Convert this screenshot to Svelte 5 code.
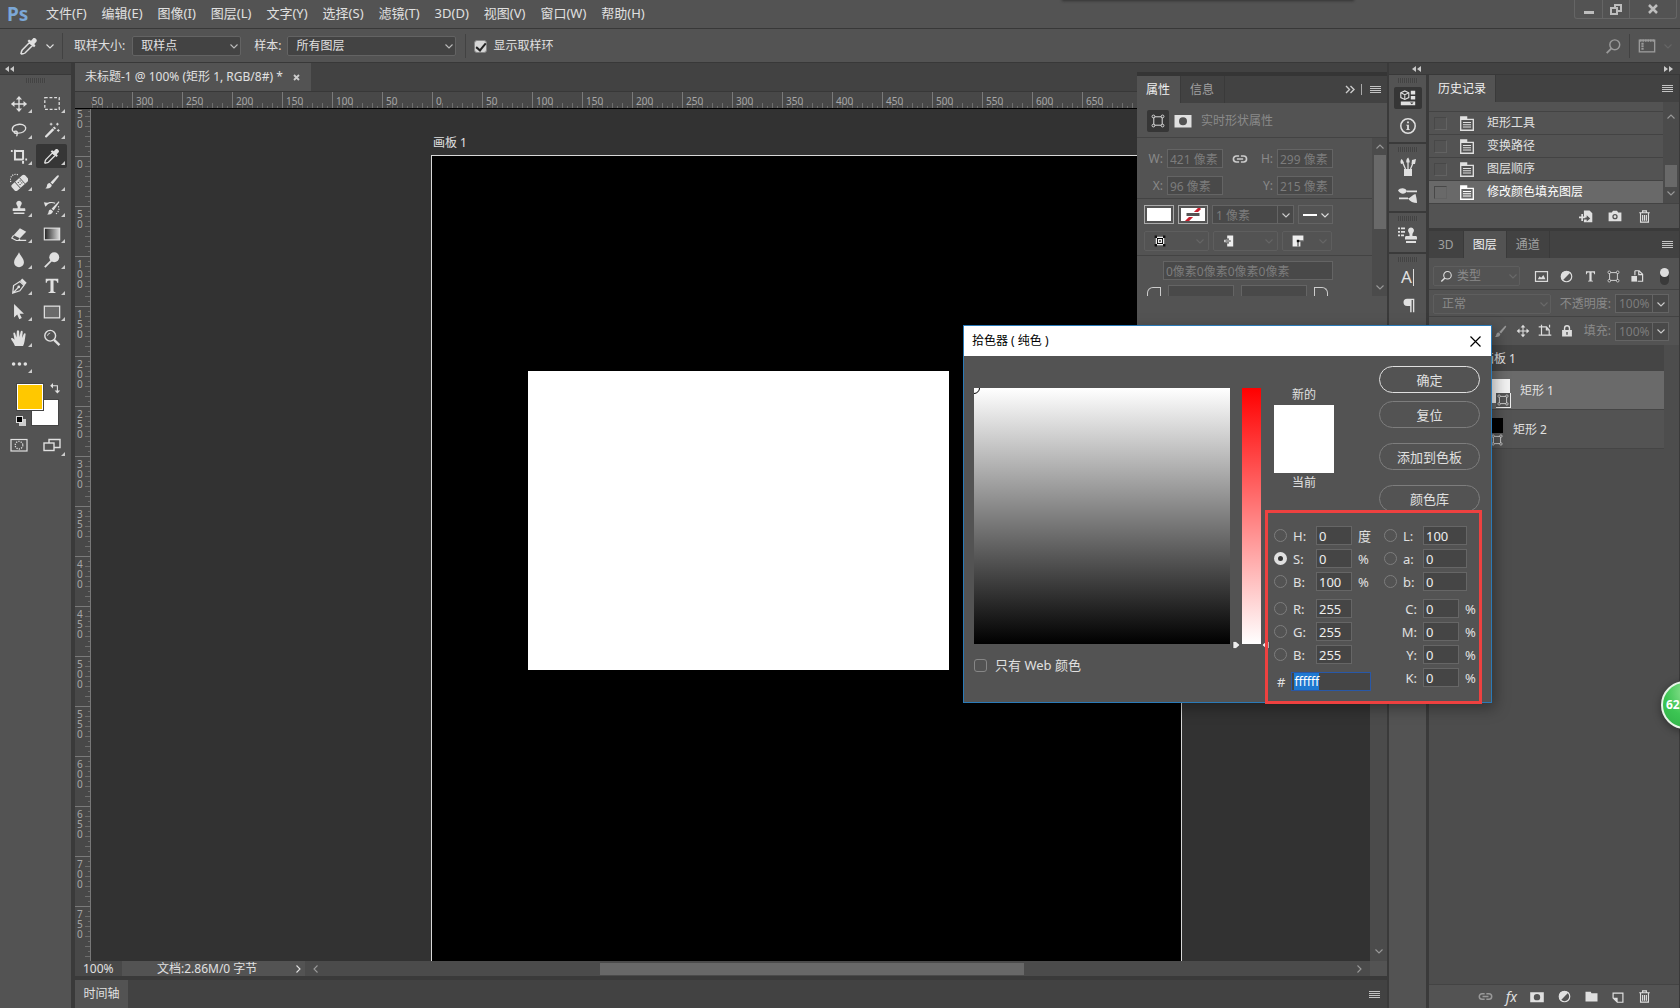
<script lang="ts">
	import { onMount } from 'svelte';

	const menus = ['文件(F)', '编辑(E)', '图像(I)', '图层(L)', '文字(Y)', '选择(S)', '滤镜(T)', '3D(D)', '视图(V)', '窗口(W)', '帮助(H)'];

	const tools = [
		['move', '移动'], ['marquee', '选框'],
		['lasso', '套索'], ['wand', '魔棒'],
		['crop', '裁剪'], ['eyedropper', '吸管'],
		['heal', '修复画笔'], ['brush', '画笔'],
		['stamp', '仿制图章'], ['history', '历史记录画笔'],
		['eraser', '橡皮擦'], ['gradient', '渐变'],
		['blur', '模糊'], ['dodge', '减淡'],
		['pen', '钢笔'], ['type', '文字'],
		['arrow', '路径选择'], ['rect', '矩形'],
		['hand', '抓手'], ['zoom', '缩放'],
		['dots', '更多']
	];

	const xLabels = Array.from({ length: 21 }, (_, i) => Math.abs(-350 + i * 50));
	const yLabels = Array.from({ length: 17 }, (_, i) => Math.abs(-50 + i * 50));

	const history = ['矩形工具', '变换路径', '图层顺序', '修改颜色填充图层'];
	let currentStep = $state(3);
	let activeTool = $state('eyedropper');
	let channel = $state('S');
	let hex = $state('ffffff');
	let hexInput: HTMLInputElement;

	const hsb = [
		{ id: 'H', label: 'H:', value: '0', unit: '度' },
		{ id: 'S', label: 'S:', value: '0', unit: '%' },
		{ id: 'B', label: 'B:', value: '100', unit: '%' }
	];
	const rgb = [
		{ id: 'R', label: 'R:', value: '255', unit: '' },
		{ id: 'G', label: 'G:', value: '255', unit: '' },
		{ id: 'Bl', label: 'B:', value: '255', unit: '' }
	];
	const lab = [
		{ id: 'L', label: 'L:', value: '100' },
		{ id: 'a', label: 'a:', value: '0' },
		{ id: 'b', label: 'b:', value: '0' }
	];
	const cmyk = ['C', 'M', 'Y', 'K'];

	// all icons are drawn on a 20x20 grid
	const icons: Record<string, string> = {
		move: '<path d="M10 4v12M4 10h12" stroke="currentColor" stroke-width="1.5"/><path d="M10 1l3.400 4H6.600zM10 19l3.400-4H6.600zM1 10l4-3.400v6.800zM19 10l-4-3.400v6.800z"/>',
		marquee: '<rect x="2" y="3" width="16" height="13" fill="none" stroke="currentColor" stroke-width="1.4" stroke-dasharray="3.2 2"/>',
		lasso: '<path d="M6 13C1 11.500 1.500 6 7 4.300c5-1.600 10 0 10.500 3.400.4 3.500-4 6-9 5.700M8 13c.5-1.800-2.800-2.300-3.300-.8-.4 1.500 2.500 2 3.300.8 .4 1.400-.8 2.600-.3 4" fill="none" stroke="currentColor" stroke-width="1.500"/>',
		wand: '<path d="M2.500 16.500L10.500 8l2 2-8.500 8.200c-1 .8-2.500-.7-1.500-1.700z"/><path d="M11 7.500l1.500-1.500 2 2L13 9.500z"/><path d="M9 2v3M7.500 3.500h3M16 2v3M14.500 3.500h3M17 9v3M15.500 10.500h3" stroke="currentColor" stroke-width="1.100"/>',
		crop: '<path d="M5.500 3V14H15M1 4.500H3M5 4.500H14.500V14M14.500 15.500v3M17 14h2" fill="none" stroke="currentColor" stroke-width="2.200"/>',
		eyedropper: '<path d="M10.500 6.500l3 3L6 17c-1.500 1-2 .5-3.500 1L2 17.500c.5-1.500.2-2 1.200-3.500z" fill="none" stroke="currentColor" stroke-width="1.500"/><path d="M8.500 5l1.500-1.500 2 1.200L14 2.500c1.500-1.500 5 1.500 3.400 3.200L15.300 8l1.200 1.700-1.500 1.500z"/>',
		heal: '<g transform="rotate(-42 11 11)"><rect x="1" y="6.500" width="20" height="9" rx="2.500"/><path d="M7.500 6.500v9M14.500 6.500v9" stroke="#535353"/><path d="M9.300 9.500h1.200M12 9.500h1.200M9.300 12.500h1.200M12 12.500h1.200" stroke="#444" stroke-width="1.300"/></g><path d="M1 10a6 6 0 0 1 8-8" fill="none" stroke="currentColor" stroke-width="1.300" stroke-dasharray="1.300 1.300"/>',
		brush: '<path d="M17 2.500c.8.500.7 1.200.2 1.900l-6.500 8.100-2.400-2L15.600 3c.4-.5 1-.7 1.400-.5zM7.500 11.200l2.300 2c-.3 3-3.300 4.700-7.300 3.700 1.700-.6 1.700-1.700 2-3.300.4-1.600 1.600-2.400 3-2.400z"/>',
		stamp: '<path d="M10 2a3 3 0 0 1 2.300 5c-.8 1-.9 1.700-.8 3.200H16c.8 0 1 .5 1 1.200v2H3v-2c0-.7.200-1.200 1-1.200h4.500c.1-1.500 0-2.200-.8-3.200A3 3 0 0 1 10 2zM4 15h12v1.700H4z"/>',
		history: '<path d="M17.500 2.500l.8.800-6.500 9.500-2.300-1.900zM8.800 11.700l2.300 2c-.5 2.700-3 4.300-6.600 3.300 1.600-.8 1.400-1.500 1.700-2.900.3-1.500 1.300-2.500 2.600-2.400z"/><path d="M3 7c2-3 6.500-4 10.500-2.300" fill="none" stroke="currentColor" stroke-width="1.300"/><path d="M1 3.500l5.500 1-3.900 4z"/><path d="M17 8c1.500 3 .5 7-3.500 9" fill="none" stroke="currentColor" stroke-width="1.300" stroke-dasharray="1.300 1.500"/>',
		eraser: '<path d="M11 3.500L18 7.500l-7 7.300L4 11.500z"/><path d="M4 11.500l-2 3 5 2.700h2.500l1.500-2M9 17h9" fill="none" stroke="currentColor" stroke-width="1.300"/>',
		gradient: '<defs><linearGradient id="toolGradient"><stop stop-color="#222"/><stop offset="1" stop-color="#ddd"/></linearGradient></defs><rect x="1.500" y="3.500" width="17" height="13" fill="url(#toolGradient)" stroke="currentColor" stroke-width="1.300"/>',
		blur: '<path d="M10 1.500c1.600 4 5.500 7 5.500 11a5.500 5.500 0 0 1-11 0c0-4 3.900-7 5.500-11z"/>',
		dodge: '<circle cx="12.500" cy="7" r="5.500"/><path d="M9.500 10.500L2 18" stroke="currentColor" stroke-width="2"/>',
		pen: '<path d="M3 18L4 9.500 11 5l4.500 4.300-4.600 6zM3 18l6.300-6.500" fill="none" stroke="currentColor" stroke-width="1.400"/><path d="M11.300 4.200l2.300-2.500 4.900 4.600-2.300 2.800z"/><circle cx="9.700" cy="11" r="1.500"/>',
		type: '<path d="M3 2h14v4.500h-1.300c-.3-1.900-.7-2.600-2.300-2.600h-1.700v11.300c0 1 .6 1.300 2.100 1.400v1.200H6.200v-1.200c1.500-.1 2.100-.4 2.100-1.400V3.900H6.600C5 3.900 4.600 4.600 4.300 6.500H3z"/>',
		arrow: '<path d="M4.500 1v15l3.500-3.200 2.300 5.200 2.800-1.200L10.700 12H15.500z"/>',
		rect: '<rect x="1.500" y="3.500" width="17" height="13" fill="#6b6b6b" stroke="currentColor" stroke-width="1.400"/>',
		hand: '<path d="M5.500 19C4 14.500 1.500 12.500 1 10.500c.8-1.200 2.300-.6 4 1.500L3.700 5c.2-1.500 1.600-1.400 2.100 0l1.400 4.500L7.600 2.500c.3-1.600 2.200-1.600 2.500 0l.4 6.800 1.300-6.300c.5-1.500 2.200-1.300 2.300.2L13.500 10l1.800-4.500c.7-1.200 2.200-.8 2 .6C16.500 12 16.200 15.500 14.500 19z"/>',
		zoom: '<circle cx="8" cy="7.500" r="6" fill="none" stroke="currentColor" stroke-width="1.600"/><path d="M5 7.500a3.500 3.500 0 0 1 3-3" fill="none" stroke="currentColor"/><path d="M12.300 12l6 6" stroke="currentColor" stroke-width="2.600"/>',
		dots: '<circle cx="4" cy="10" r="2"/><circle cx="10.500" cy="10" r="2"/><circle cx="17" cy="10" r="2"/>',
		quickmask: '<rect x="2" y="4.500" width="16" height="11.500" fill="none" stroke="currentColor" stroke-width="1.200"/><circle cx="10" cy="10.200" r="3.800" fill="none" stroke="currentColor" stroke-width="1.300" stroke-dasharray="1.200 1.200"/>',
		screen: '<path d="M7 8V4.500h11v8h-6" fill="none" stroke="currentColor" stroke-width="1.400"/><rect x="2" y="8" width="10" height="7.500" fill="none" stroke="currentColor" stroke-width="1.400"/>',
		swap: '<path d="M6 6h7v7" fill="none" stroke="currentColor" stroke-width="1.400"/><path d="M7.500 2.500v7L4 6zM9.500 12h7L13 15.500z"/>',
		link: '<path d="M9 6.700H6a3.300 3.300 0 0 0 0 6.600H9M11 6.700h3a3.300 3.300 0 0 1 0 6.600H11M6.500 10h7" fill="none" stroke="currentColor" stroke-width="1.800"/>',
		shape: '<path d="M4 4h12v12H4z" fill="none" stroke="currentColor" stroke-width="1.400"/><g fill="#3a3a3a" stroke="currentColor" stroke-width="1.300"><circle cx="3.500" cy="3.500" r="2"/><circle cx="16.500" cy="3.500" r="2"/><circle cx="3.500" cy="16.500" r="2"/><circle cx="16.500" cy="16.500" r="2"/></g>',
		mask: '<path fill-rule="evenodd" d="M1.500 4h17v12.500h-17zM10 6.200a4 4 0 1 0 0 8 4 4 0 0 0 0-8z"/>',
		panel: '<path d="M1 3.500l5-2.300L11 3.500v6l-5 2.300-5-2.300z" fill="none" stroke="currentColor" stroke-width="1.400"/><path d="M1 3.500l5 2.300 5-2.300M6 5.800v6" fill="none" stroke="currentColor" stroke-width="1.300"/><path d="M13.500 1H19v4.500h-5.500zM13.500 7.500H19V12h-5.500zM1 14.500h18V19H1z"/><path d="M12.500 15.500h4.500l-2.200 2.300z" fill="#333"/>',
		info: '<circle cx="10" cy="10" r="8" fill="none" stroke="currentColor" stroke-width="1.700"/><path d="M9 5h2v2H9zM8 8.500h3v5h1v1H8v-1h1v-4H8z"/>',
		brushes: '<path d="M6 12h8v7H6z"/><path d="M7.500 12L4.500 5M10 12V5M12.500 12L15 6" stroke="currentColor" stroke-width="1.300"/><path d="M3 7C2 5 2.500 3 3.500 2c1 1 2.300 2.500 2.300 4zM8.300 5.500C8 3 9 1 10.200.5 11 2 12 4 11.600 5.500zM13.500 7l.5-4 4-1-1 5z"/>',
		presets: '<path d="M9 5.500h10v1.800H9zM1 12.500h9v1.800H1zM0 5.500c2-3.500 8-3 9 .8-2 3.500-7 3-9-.8zM10 13.500c2-.5 5-4 7.500-4.500.8 3 1.500 6 1.500 9-3.500 0-7-1.500-9-4.500z"/>',
		clone: '<path d="M13 1.500a3 3 0 0 1 2.200 5c-.7 1-.9 2-.7 3.500h3c1 0 1.500.7 1.500 1.500v2H7v-2c0-.8.500-1.500 1.500-1.500h3c.2-1.500 0-2.500-.7-3.500a3 3 0 0 1 2.200-5zM8 15h10v2H8zM0 1.500h2v1.700H0zM3 1.500h4v1.700H3zM0 5h2v1.700H0zM3 5h4v1.700H3zM0 8.500h2v1.700H0zM3 8.500h3v1.700H3z"/>',
		para: '<path d="M9 3h8v15h-1.500V4.500H14V18h-1.600v-7H9a4 4 0 0 1 0-8z"/>',
		doc: '<path d="M3 6h14v12H3z" fill="none" stroke="currentColor" stroke-width="1.500"/><path d="M2.300 2.500h8V6h-8z"/><path d="M5.500 9.500h9M5.500 12h9M5.500 14.500h9" stroke="currentColor" stroke-width="1.200"/>',
		newdoc: '<path fill-rule="evenodd" d="M7 2h8l4 4v13H7v-4h4v3l5-4.500L11 9v3H7z"/><path d="M4.500 7v10M0 12h9" stroke="currentColor" stroke-width="2.400"/>',
		camera: '<path fill-rule="evenodd" d="M2 5.500h4l1.500-2h5l1.500 2h4v11H2zM10 7.500a3.300 3.300 0 1 0 0 6.600 3.300 3.300 0 0 0 0-6.600z"/><circle cx="10" cy="10.800" r="1.700"/>',
		trash: '<path d="M3 5h14M7.500 4.500v-2h5v2M4.700 5.500v12h10.600v-12M7.500 8v7.500M10 8v7.500M12.500 8v7.500" fill="none" stroke="currentColor" stroke-width="1.500"/>',
		search: '<circle cx="11.500" cy="8" r="5.800" fill="none" stroke="currentColor" stroke-width="1.700"/><path d="M7.500 12.200L2 17.800" stroke="currentColor" stroke-width="2.200"/>',
		image: '<rect x="2" y="3.500" width="16" height="13" fill="none" stroke="currentColor" stroke-width="1.600"/><path d="M5 13.500l2.500-4 2 2L12.500 8l2.800 5.500z"/>',
		adjust: '<circle cx="10" cy="10" r="7" fill="none" stroke="currentColor" stroke-width="1.600"/><path d="M15.200 4.800A7.300 7.300 0 0 0 4.800 15.200z"/>',
		smart: '<path d="M7 2.500h6l5 5v10H11M7 2.500V9M12.500 3v5H18" fill="none" stroke="currentColor" stroke-width="1.700"/><path d="M2 10h8v8H2z"/>',
		artboard: '<path d="M5 1v15h11V8.500L12 4H1M1 16h3M16 16h3M12 4v4.500h4M16.500 1v4" fill="none" stroke="currentColor" stroke-width="1.700"/>',
		lock: '<path fill-rule="evenodd" d="M3 8.500h14V18H3zM9 11.500v4h2v-4z"/><path d="M6.500 9V6a3.500 3.500 0 0 1 7 0v3" fill="none" stroke="currentColor" stroke-width="2"/>',
		folder: '<path d="M2 3.500h7l1 2h8v11H2z"/>',
		newlayer: '<path d="M3 4.500h14v13H9L3 11.500z" fill="none" stroke="currentColor" stroke-width="1.700"/><path d="M3 11h6.500v6.500z"/>',
		layout: '<rect x="1.500" y="3.500" width="17" height="13" fill="none" stroke="currentColor" stroke-width="1.500"/><path d="M2 4h16M5 6.500v8" stroke="currentColor" stroke-width="2.500" stroke-dasharray="2 .8"/>',
		align1: '<path d="M4 4h12v12H4z" fill="#000" stroke="currentColor" stroke-width="2"/><path d="M7.500 7.500h5v5h-5z" fill="#535353" stroke="#eee" stroke-width="2"/><path d="M1 1h4v4H1zM15 1h4v4h-4zM1 15h4v4H1zM15 15h4v4h-4z" fill="#111"/>',
		align2: '<path d="M7 1h10v18H7v-5h3v-2H5V8h5V6H7z"/><path d="M2 8h4v4H2z"/><path d="M4 10h9" stroke="#222" stroke-width="1.500"/>',
		align3: '<path d="M1 1h18v10h-5v8H1z"/><path d="M10 19v-9h9" fill="none" stroke="#111" stroke-width="1.500"/><path d="M8 8h4v4H8z" fill="#111"/>'
	};

	onMount(() => {
		hexInput.focus();
		hexInput.select();
	});
</script>

{#snippet icon(name: string, size = 20)}
	<svg class="icon" width={size} height={size} viewBox="0 0 20 20" fill="currentColor" aria-hidden="true">{@html icons[name]}</svg>
{/snippet}

{#snippet chevron(turn = 'down')}
	<svg class="chevron {turn}" width="8" height="8" viewBox="0 0 8 8" aria-hidden="true"><path d="M.5 2.500L4 6l3.500-3.500" fill="none" stroke="currentColor" stroke-width="1.100" /></svg>
{/snippet}

{#snippet doubleArrow(flip = false)}
	<svg class:flip width="9" height="6" viewBox="0 0 9 6" fill="currentColor" aria-hidden="true"><path d="M4 0v6L0 3zM9 0v6L5 3z" /></svg>
{/snippet}

{#snippet burger()}
	<button class="burger" aria-label="面板菜单"><i></i><i></i><i></i><i></i></button>
{/snippet}

<div class="app">
	<header class="menubar">
		<b class="logo">Ps</b>
		<nav>
			{#each menus as menu}
				<button>{menu}</button>
			{/each}
		</nav>
		<div class="notch"></div>
		<div class="window-buttons">
			<button aria-label="最小化"><svg width="12" height="12" viewBox="0 0 12 12"><path d="M1 9.500h10" stroke="currentColor" stroke-width="3" /></svg></button>
			<button aria-label="还原"><svg width="12" height="12" viewBox="0 0 12 12" fill="none" stroke="currentColor" stroke-width="2"><path d="M1 5h6v6H1zM5 5V2h6v6H8" /></svg></button>
			<button aria-label="关闭"><svg width="12" height="12" viewBox="0 0 12 12"><path d="M2 2l8 8M10 2l-8 8" stroke="currentColor" stroke-width="2.500" /></svg></button>
		</div>
	</header>

	<div class="options">
		<span class="current-tool">{@render icon('eyedropper')}{@render chevron()}</span>
		<label for="sample-size">取样大小:</label>
		<span class="pick size">
			<select id="sample-size"><option>取样点</option></select>{@render chevron()}
		</span>
		<label for="sample">样本:</label>
		<span class="pick sample">
			<select id="sample"><option>所有图层</option></select>{@render chevron()}
		</span>
		<span class="divider"></span>
		<label class="check ring"><input type="checkbox" checked />显示取样环</label>
		<button class="ghost search" aria-label="搜索">{@render icon('search', 17)}</button>
		<span class="divider"></span>
		<button class="ghost layout" aria-label="工作区">{@render icon('layout', 18)}</button>
		<span class="faint">{@render chevron()}</span>
	</div>

	<div class="workspace">
		<aside class="toolbox">
			<div class="dock-head">{@render doubleArrow()}</div>
			<div class="grip"></div>
			<div class="tools">
				{#each tools as [name, title]}
					<button class:active={activeTool === name} aria-label={title} onclick={() => (activeTool = name)}>
						{@render icon(name, 18)}
						{#if name !== 'zoom'}<i class="corner"></i>{/if}
					</button>
				{/each}
			</div>
			<div class="swatches">
				<button class="bg" aria-label="背景色"></button>
				<button class="fg" aria-label="前景色"></button>
				<span class="swap">{@render icon('swap', 16)}</span>
				<span class="default"></span>
			</div>
			<div class="tools modes">
				<button aria-label="快速蒙版">{@render icon('quickmask')}</button>
				<button aria-label="屏幕模式">{@render icon('screen')}<i class="corner"></i></button>
			</div>
		</aside>

		<main>
			<div class="doc-tabs">
				<div class="doc-tab">未标题-1 @ 100% (矩形 1, RGB/8#) * <button aria-label="关闭文档"><svg width="7" height="7" viewBox="0 0 7 7"><path d="M1 1l5 5M6 1L1 6" stroke="currentColor" stroke-width="1.800" /></svg></button></div>
			</div>
			<div class="ruler-x">
				<span class="origin"></span>
				<div class="marks">
					{#each xLabels as n}<span>{n}</span>{/each}
				</div>
			</div>
			<div class="view">
				<div class="ruler-y">
					<div class="marks">
						{#each yLabels as n}<span>{n}</span>{/each}
					</div>
				</div>
				<div class="canvas">
					<span class="board-name">画板 1</span>
					<div class="board"><div class="shape"></div></div>
				</div>
				<div class="scroll-y">{@render chevron()}</div>
			</div>
			<div class="status">
				<span class="zoom">100%</span>
				<span class="size-info">文档:2.86M/0 字节</span>
				{@render chevron('right')}
				<div class="scroll-x">
					{@render chevron('left')}
					<span class="thumb"></span>
					{@render chevron('right')}
				</div>
			</div>
			<footer class="timeline">
				<button class="tab">时间轴</button>
				{@render burger()}
			</footer>

			<section class="properties">
				<div class="tabs">
					<button class="tab on">属性</button>
					<button class="tab">信息</button>
					<span class="tab-tools">
						<svg width="10" height="9" viewBox="0 0 10 9" fill="none" stroke="currentColor" stroke-width="1.400"><path d="M1 1l3.500 3.500L1 8M5.500 1L9 4.500 5.500 8" /></svg>
						<i class="bar"></i>
						{@render burger()}
					</span>
				</div>
				<div class="kind">
					<span class="kind-icon">{@render icon('shape', 14)}</span>
					{@render icon('mask')}
					<span>实时形状属性</span>
				</div>
				<div class="prop-body">
					<div class="prop-rows">
						<div class="dims">
							<label for="pw">W:</label><input id="pw" value="421 像素" disabled />
							<span class="chain">{@render icon('link', 18)}</span>
							<label for="ph">H:</label><input id="ph" value="299 像素" disabled />
							<label for="px">X:</label><input id="px" value="96 像素" disabled />
							<span></span>
							<label for="py">Y:</label><input id="py" value="215 像素" disabled />
						</div>
						<div class="strokes">
							<button class="fill" aria-label="填充"></button>
							<button class="fill none" aria-label="描边"><svg width="24" height="13" viewBox="0 0 24 13"><path d="M5 14L19 0" stroke="#c8202f" stroke-width="3" /><path d="M5 4.500h14v4H5z" fill="#555" stroke="#fff" /></svg></button>
							<span class="combo"><input aria-label="描边宽度" value="1 像素" disabled /><button aria-label="选择宽度">{@render chevron()}</button></span>
							<button class="dash" aria-label="描边类型"><i></i>{@render chevron()}</button>
						</div>
						<div class="aligns">
							<button aria-label="对齐">{@render icon('align1', 12)}<span class="faint">{@render chevron()}</span></button>
							<button aria-label="端点">{@render icon('align2', 12)}<span class="faint">{@render chevron()}</span></button>
							<button aria-label="角点">{@render icon('align3', 12)}<span class="faint">{@render chevron()}</span></button>
						</div>
						<div class="corners">
							<input class="radii" aria-label="圆角半径" value="0像素0像素0像素0像素" disabled />
							<i class="arc"></i><input aria-label="左上角" disabled /><input aria-label="右上角" disabled /><i class="arc r"></i>
						</div>
					</div>
					<div class="prop-scroll">{@render chevron('up')}<span class="thumb"></span>{@render chevron()}</div>
				</div>
			</section>
		</main>

		<div class="dock">
			<div class="dock-head both">{@render doubleArrow()}{@render doubleArrow(true)}</div>
			<div class="dock-body">
				<aside class="strip">
					<div class="group">
						<div class="grip"></div>
						<button class="active" aria-label="属性">{@render icon('panel', 16)}</button>
						<button aria-label="信息">{@render icon('info', 18)}</button>
					</div>
					<div class="group">
						<div class="grip"></div>
						<button aria-label="画笔预设">{@render icon('brushes')}</button>
						<button aria-label="画笔">{@render icon('presets')}</button>
					</div>
					<div class="group">
						<div class="grip"></div>
						<button aria-label="仿制源">{@render icon('clone')}</button>
					</div>
					<div class="group last">
						<div class="grip"></div>
						<button class="letter" aria-label="字符">A<i></i></button>
						<button aria-label="段落">{@render icon('para', 18)}</button>
					</div>
				</aside>

				<div class="panels">
					<div class="tabs">
						<button class="tab on">历史记录</button>
						<span class="tab-tools">{@render burger()}</span>
					</div>
					<div class="history">
						<ul>
							{#each history as step, i}
								<li class:on={currentStep === i}>
									<i class="box"></i>{@render icon('doc', 18)}
									<button onclick={() => (currentStep = i)}>{step}</button>
								</li>
							{/each}
						</ul>
						<div class="history-scroll">{@render chevron('up')}<span class="thumb"></span>{@render chevron()}</div>
					</div>
					<div class="history-tools">
						<button aria-label="新文档">{@render icon('newdoc', 14)}</button>
						<button aria-label="快照">{@render icon('camera', 16)}</button>
						<button aria-label="删除状态">{@render icon('trash', 15)}</button>
					</div>

					<div class="tabs layer-tabs">
						<button class="tab">3D</button>
						<button class="tab on">图层</button>
						<button class="tab">通道</button>
						<span class="tab-tools">{@render burger()}</span>
					</div>
					<div class="row filter">
						<span class="pick">
							{@render icon('search', 13)}
							<select aria-label="类型" disabled><option>类型</option></select>{@render chevron()}
						</span>
						<div class="filter-icons">
							{@render icon('image', 15)}
							{@render icon('adjust', 15)}
							{@render icon('type', 13)}
							{@render icon('shape', 13)}
							{@render icon('smart', 14)}
						</div>
						<button class="toggle" aria-label="过滤开关"><i></i></button>
					</div>
					<div class="row blend">
						<span class="pick">
							<select aria-label="混合模式" disabled><option>正常</option></select>{@render chevron()}
						</span>
						<label for="opacity">不透明度:</label>
						<span class="combo"><input id="opacity" value="100%" disabled /><button aria-label="不透明度滑块">{@render chevron()}</button></span>
					</div>
					<div class="row locks">
						<span class="dim">{@render icon('brush', 15)}</span>
						{@render icon('move', 14)}
						{@render icon('artboard', 14)}
						{@render icon('lock', 14)}
						<label for="fill">填充:</label>
						<span class="combo"><input id="fill" value="100%" disabled /><button aria-label="填充滑块">{@render chevron()}</button></span>
					</div>
					<div class="layers">
						<div class="layer group-row">画板 1</div>
						<div class="layer on">
							<span class="preview white"><span class="badge framed">{@render icon('shape', 12)}</span></span>矩形 1
						</div>
						<div class="layer">
							<span class="preview black"><span class="badge">{@render icon('shape', 12)}</span></span>矩形 2
						</div>
					</div>
					<div class="layer-tools">
						<button class="dim" aria-label="链接">{@render icon('link', 17)}</button>
						<button class="fx" aria-label="图层样式"><em>fx</em></button>
						<button aria-label="蒙版">{@render icon('mask', 16)}</button>
						<button aria-label="调整">{@render icon('adjust', 15)}</button>
						<button aria-label="新建组">{@render icon('folder', 15)}</button>
						<button aria-label="新建图层">{@render icon('newlayer', 14)}</button>
						<button aria-label="删除">{@render icon('trash', 15)}</button>
					</div>
				</div>
			</div>
		</div>
	</div>

	<div class="picker" role="dialog" aria-label="拾色器">
		<div class="title">
			<span>拾色器 ( 纯色 )</span>
			<button aria-label="关闭"><svg width="11" height="11" viewBox="0 0 11 11"><path d="M.5.5l10 10M10.500.5l-10 10" stroke="#000" stroke-width="1.200" /></svg></button>
		</div>
		<div class="picker-body">
			<div class="spectrum">
				<div class="field"><i></i></div>
				<label class="check web"><input type="checkbox" />只有 Web 颜色</label>
			</div>
			<div class="slider">
				<svg class="handle" width="38" height="8" viewBox="0 0 38 8" fill="#eee" stroke="#333" stroke-width=".6"><path d="M1 .500h3L8 4l-4 3.500H1zM37 .500h-3L30 4l4 3.500h3z" /></svg>
			</div>
			<div class="values">
				<div class="top">
					<div class="compare"><span>新的</span><i></i><span>当前</span></div>
					<div class="actions">
						<button class="ok">确定</button>
						<button>复位</button>
						<button>添加到色板</button>
						<button>颜色库</button>
					</div>
				</div>
				<div class="numbers">
					<div class="col">
						{#each [hsb, rgb] as set}
							<div class="set">
								{#each set as c}
									<div class="num">
										<input type="radio" name="channel" id="r{c.id}" value={c.id} bind:group={channel} />
										<label for="r{c.id}">{c.label}</label>
										<input type="text" aria-label={c.label} value={c.value} />
										<span>{c.unit}</span>
									</div>
								{/each}
							</div>
						{/each}
						<div class="hex">
							<label for="hex">#</label>
							<input id="hex" type="text" bind:value={hex} bind:this={hexInput} />
						</div>
					</div>
					<div class="col second">
						<div class="set">
							{#each lab as c}
								<div class="num wide">
									<input type="radio" name="channel" id="r{c.id}" value={c.id} bind:group={channel} />
									<label for="r{c.id}">{c.label}</label>
									<input type="text" aria-label={c.label} value={c.value} />
								</div>
							{/each}
						</div>
						<div class="set">
							{#each cmyk as c}
								<div class="num ink">
									<label for="k{c}">{c}:</label>
									<input type="text" id="k{c}" value="0" />
									<span>%</span>
								</div>
							{/each}
						</div>
					</div>
				</div>
			</div>
		</div>
		<div class="highlight"></div>
	</div>

	<div class="ball">62</div>
</div>

<style>
	:global(body) {
		background: #535353;
	}
	.app {
		position: relative;
		display: flex;
		flex-direction: column;
		height: 100vh;
		overflow: hidden;
		background: #535353;
		color: #e0e0e0;
		font: 12px/16px 'Noto Sans', 'Noto Sans CJK SC', sans-serif;
	}
	.app * {
		box-sizing: border-box;
	}
	button, input, select {
		font: inherit;
		color: inherit;
		margin: 0;
		padding: 0;
		border: 0;
		background: none;
		border-radius: 0;
	}
	input, select {
		min-width: 0;
		appearance: none;
		outline: none;
	}
	ul {
		list-style: none;
		margin: 0;
		padding: 0;
	}
	label {
		white-space: nowrap;
	}
	svg {
		display: block;
		flex: none;
	}
	.flip, .chevron.up {
		transform: rotate(180deg);
	}
	.chevron.right {
		transform: rotate(-90deg);
	}
	.chevron.left {
		transform: rotate(90deg);
	}
	.faint {
		color: #666;
	}
	.dim {
		color: #999;
	}

	/* menu bar */
	.menubar {
		display: flex;
		align-items: center;
		height: 29px;
		padding-left: 7px;
		border-bottom: 1px solid #383838;
		font-size: 13px;
	}
	.logo {
		width: 39px;
		color: #7ba7d7;
		font-size: 19px;
		line-height: 26px;
	}
	nav {
		display: flex;
		gap: 15px;
		padding-bottom: 3px;
	}
	nav button {
		white-space: nowrap;
	}
	.notch {
		align-self: flex-start;
		width: 288px;
		height: 1px;
		margin: -2px 222px 0 auto;
		box-shadow: 0 0 3px 2px #333;
	}
	.window-buttons {
		display: flex;
		align-self: flex-start;
		height: 19px;
		margin-right: 3px;
		border: 1px solid #656565;
		border-top: 0;
		border-radius: 0 0 3px 3px;
		color: #bdbdbd;
	}
	.window-buttons button {
		display: grid;
		place-items: center;
		width: 27px;
	}
	.window-buttons button + button {
		border-left: 1px solid #656565;
	}
	.window-buttons button:last-child {
		width: 47px;
	}

	/* options bar */
	.options {
		display: flex;
		align-items: center;
		height: 34px;
		border-bottom: 1px solid #383838;
		padding: 1px 8px 0 19px;
	}
	.current-tool {
		display: flex;
		align-items: center;
		gap: 7px;
		height: 26px;
		width: 44px;
		margin-right: 11px;
		border-right: 1px solid #424242;
	}
	.pick {
		position: relative;
		display: flex;
		align-items: center;
		height: 20px;
		border: 1px solid #636363;
		border-radius: 2px;
		background: #434343;
	}
	.pick select {
		flex: 1;
		height: 100%;
		padding-left: 8px;
	}
	.pick > .chevron {
		position: absolute;
		right: 2px;
		pointer-events: none;
		color: #bbb;
	}
	.pick.size {
		width: 109px;
		margin: 0 13px 0 7px;
	}
	.pick.sample {
		width: 169px;
		margin: 0 9px 0 6px;
	}
	.divider {
		width: 1px;
		height: 24px;
		background: #424242;
	}
	.check {
		display: flex;
		align-items: center;
		gap: 6px;
	}
	.check input {
		width: 13px;
		height: 13px;
		border: 1px solid #868686;
		border-radius: 3px;
	}
	.check input:checked {
		background: #d6d6d6;
	}
	.check input:checked::after {
		content: '';
		display: block;
		width: 4px;
		height: 8px;
		margin: 0 0 0 3px;
		border: solid #222;
		border-width: 0 2px 2px 0;
		transform: rotate(40deg);
	}
	.ring {
		margin-left: 8px;
	}
	.ghost {
		color: #9a9a9a;
	}
	.options .search {
		margin: 0 7px 0 auto;
	}
	.layout {
		margin: 0 8px;
	}

	.workspace {
		display: flex;
		flex: 1;
		min-height: 0;
	}
	.dock-head {
		height: 12px;
		padding: 3px 5px;
		background: #424242;
		border-bottom: 1px solid #383838;
		color: #c8c8c8;
	}
	.grip {
		height: 5px;
		margin: 0 auto;
		width: 20px;
		background: repeating-linear-gradient(90deg, #434343 0 1px, #555 1px 2px);
	}

	/* tools */
	.toolbox {
		width: 75px;
		border-right: 4px solid #3a3a3a;
		flex: none;
	}
	.toolbox > .grip {
		margin: 3px 0 9px 26px;
	}
	.tools {
		display: grid;
		grid-template-columns: 31px 31px;
		grid-auto-rows: 24px;
		gap: 2px;
		padding-left: 3px;
	}
	.tools button {
		position: relative;
		display: grid;
		place-items: center;
	}
	.tools .active {
		background: #363636;
		border-radius: 2px;
	}
	.corner {
		position: absolute;
		right: 2px;
		bottom: 3px;
		border: 2px solid;
		border-color: transparent #ccc #ccc transparent;
	}
	.swatches {
		position: relative;
		height: 50px;
		margin: 7px 0 2px 16px;
	}
	.swatches > * {
		position: absolute;
	}
	.fg {
		left: 1px;
		top: 1px;
		width: 26px;
		height: 26px;
		background: #ffc800;
		border: 1px solid #fff;
		outline: 1px solid #444;
	}
	.bg {
		left: 16px;
		top: 17px;
		width: 26px;
		height: 25px;
		background: #fff;
		outline: 1px solid #444;
	}
	.swap {
		left: 31px;
		top: -2px;
	}
	.default {
		left: 0;
		top: 33px;
		width: 7px;
		height: 7px;
		background: #000;
		border: 1px solid #ddd;
		box-shadow: 3px 3px 0 #ccc;
	}
	.modes button {
		align-items: start;
	}

	/* document */
	main {
		position: relative;
		display: flex;
		flex-direction: column;
		flex: 1;
		min-width: 0;
		border-right: 2px solid #3a3a3a;
		background: #424242;
	}
	.doc-tabs {
		display: flex;
		height: 28px;
		flex: none;
	}
	.doc-tab {
		display: flex;
		align-items: center;
		gap: 10px;
		padding: 0 11px 0 10px;
		background: #535353;
	}
	.doc-tab button {
		color: #ccc;
	}
	.ruler-x {
		display: flex;
		height: 18px;
		flex: none;
		overflow: hidden;
		background: #484848;
		border-top: 1px solid #383838;
		border-bottom: 1px solid #000;
		color: #a6a6a6;
		font-size: 10px;
		line-height: 18px;
	}
	.origin {
		position: relative;
		z-index: 1;
		width: 16px;
		flex: none;
		background: #4b4b4b;
	}
	.ruler-x .marks {
		display: flex;
		flex: 1;
		margin-left: -9px;
		background:
			repeating-linear-gradient(90deg, #6d6d6d 0 1px, transparent 1px 10px) 0 100% / 100% 5px no-repeat,
			repeating-linear-gradient(90deg, #6d6d6d 0 1px, transparent 1px 5px) 0 100% / 100% 2px no-repeat;
	}
	.ruler-x .marks span {
		width: 50px;
		padding-left: 3px;
		border-left: 1px solid #7a7a7a;
		flex: none;
	}
	.view {
		display: flex;
		flex: 1;
		min-height: 0;
	}
	.ruler-y {
		width: 16px;
		flex: none;
		overflow: hidden;
		background: #484848;
		border-right: 1px solid #777;
		color: #a6a6a6;
		font-size: 10px;
		line-height: 10px;
	}
	.ruler-y .marks {
		margin-top: -3px;
		padding-bottom: 50px;
		background:
			repeating-linear-gradient(#6d6d6d 0 1px, transparent 1px 10px) 100% 0 / 5px 100% no-repeat,
			repeating-linear-gradient(#6d6d6d 0 1px, transparent 1px 5px) 100% 0 / 2px 100% no-repeat;
	}
	.ruler-y .marks span {
		display: block;
		height: 50px;
		padding: 2px 7px 0 2px;
		border-top: 1px solid #7a7a7a;
		word-break: break-all;
	}
	.canvas {
		position: relative;
		flex: 1;
		overflow: hidden;
		background: #323232;
	}
	.board-name {
		position: absolute;
		left: 342px;
		top: 26px;
	}
	.board {
		position: absolute;
		left: 340px;
		top: 46px;
		bottom: 0;
		width: 751px;
		background: #000;
		border: 1px solid #d8d8d8;
		border-bottom: 0;
	}
	.shape {
		width: 421px;
		height: 299px;
		margin: 215px 0 0 96px;
		background: #fff;
	}
	.scroll-y {
		display: flex;
		align-items: flex-end;
		justify-content: center;
		width: 17px;
		padding-bottom: 6px;
		background: #4b4b4b;
		color: #999;
	}
	.status {
		display: flex;
		align-items: center;
		height: 15px;
		flex: none;
		background: #535353;
	}
	.zoom {
		width: 47px;
		padding-left: 8px;
		background: #484848;
	}
	.size-info {
		width: 172px;
		padding-left: 35px;
	}
	.scroll-x {
		display: flex;
		align-items: center;
		flex: 1;
		height: 100%;
		margin: 0 17px 0 3px;
		padding: 0 7px;
		background: #4b4b4b;
		color: #999;
	}
	.scroll-x .thumb {
		width: 424px;
		height: 12px;
		margin: 0 auto 0 280px;
		background: #686868;
	}
	.timeline {
		display: flex;
		justify-content: space-between;
		align-items: center;
		height: 32px;
		flex: none;
		padding-right: 7px;
		border-top: 4px solid #3a3a3a;
	}
	.timeline .tab {
		align-self: stretch;
		width: 53px;
		background: #535353;
	}
	.burger {
		display: grid;
		gap: 1px;
		padding: 2px;
		margin-right: -2px;
	}
	.burger i {
		width: 11px;
		height: 1px;
		background: #c4c4c4;
	}

	/* panel tabs */
	.tabs {
		display: flex;
		height: 27px;
		background: #424242;
		color: #a0a0a0;
	}
	.tabs .tab {
		padding: 0 9px;
		border-right: 1px solid #3a3a3a;
	}
	.tabs .on {
		background: #535353;
		color: #f0f0f0;
	}
	.tab-tools {
		display: flex;
		align-items: center;
		gap: 6px;
		margin-left: auto;
		padding-right: 6px;
		color: #ccc;
	}
	.bar {
		width: 1px;
		height: 11px;
		background: #aaa;
	}

	/* properties */
	.properties {
		position: absolute;
		top: 9px;
		right: 0;
		width: 250px;
		height: 260px;
		border-top: 4px solid #353535;
		border-bottom: 2px solid #3a3a3a;
		background: #535353;
		color: #8a8a8a;
	}
	.properties .tab {
		padding: 0 10px 0 9px;
	}
	.kind {
		display: flex;
		align-items: center;
		gap: 4px;
		height: 35px;
		padding: 2px 0 0 10px;
		border-bottom: 1px solid #434343;
	}
	.kind-icon {
		display: grid;
		place-items: center;
		width: 22px;
		height: 22px;
		background: #363636;
		border-radius: 2px;
	}
	.kind-icon, .kind > :global(svg) {
		color: #e0e0e0;
	}
	.kind span:last-child {
		margin-left: 4px;
	}
	.prop-body {
		display: flex;
		height: 158px;
	}
	.prop-rows {
		flex: 1;
		overflow: hidden;
	}
	.properties input {
		height: 19px;
		padding-left: 2px;
		background: #494949;
		border: 1px solid #646464;
		color: #7c7c7c;
	}
	.dims {
		display: grid;
		grid-template-columns: 16px 56px 26px 16px 56px;
		gap: 8px 4px;
		align-items: center;
		align-content: start;
		height: 61px;
		padding: 11px 0 0 10px;
		border-bottom: 1px solid #434343;
	}
	.dims label {
		text-align: right;
	}
	.chain {
		justify-self: center;
		color: #ccc;
	}
	.strokes {
		display: flex;
		gap: 4px;
		padding: 6px 0 0 7px;
	}
	.fill {
		width: 30px;
		height: 19px;
		padding: 2px;
		border: 1px solid #aaa;
		background: #fff;
		box-shadow: inset 0 0 0 2px #535353;
		overflow: hidden;
	}
	.combo {
		display: flex;
		width: 82px;
		height: 19px;
		border: 1px solid #646464;
		color: #ccc;
	}
	.combo input {
		flex: 1;
		height: 100%;
		border: 0;
		padding-left: 3px;
		background: #494949;
		color: #7c7c7c;
	}
	.combo button {
		display: grid;
		place-items: center;
		width: 16px;
		border-left: 1px solid #646464;
		background: #494949;
	}
	.dash {
		display: flex;
		align-items: center;
		gap: 4px;
		width: 35px;
		height: 19px;
		padding-left: 4px;
		border: 1px solid #646464;
		color: #ddd;
	}
	.dash i {
		width: 14px;
		height: 2px;
		background: #fff;
	}
	.aligns {
		display: flex;
		gap: 4px;
		height: 32px;
		padding: 7px 0 4px 7px;
		border-bottom: 1px solid #434343;
	}
	.aligns button {
		display: flex;
		align-items: center;
		justify-content: space-between;
		width: 65px;
		padding: 0 4px 0 9px;
		border: 1px solid #5e5e5e;
		border-radius: 2px;
		color: #eee;
	}
	.aligns button:last-child {
		width: 50px;
	}
	.corners {
		display: grid;
		grid-template-columns: 14px 66px 66px 14px;
		gap: 5px 7px;
		padding: 5px 0 0 10px;
	}
	.corners .radii {
		grid-column: 1 / 5;
		width: 170px;
		margin-left: 16px;
	}
	.arc {
		height: 12px;
		margin-top: 2px;
		border: solid #ccc;
		border-width: 1px 1px 0 1px;
		border-radius: 6px 0 0 0;
	}
	.arc.r {
		border-radius: 0 6px 0 0;
	}
	.prop-scroll {
		display: flex;
		flex-direction: column;
		align-items: center;
		width: 15px;
		padding: 5px 0;
		background: #4b4b4b;
		color: #999;
	}
	.prop-scroll .thumb {
		width: 12px;
		height: 74px;
		margin: 4px 0 auto;
		background: #696969;
	}

	/* right dock */
	.dock {
		display: flex;
		flex-direction: column;
		width: 291px;
		flex: none;
	}
	.dock-head.both {
		display: flex;
		justify-content: space-between;
		padding: 3px 7px 0 23px;
	}
	.dock-body {
		display: flex;
		flex: 1;
		min-height: 0;
	}
	.strip {
		width: 40px;
		border-right: 3px solid #3a3a3a;
		flex: none;
	}
	.strip .group {
		display: flex;
		flex-direction: column;
		align-items: center;
		gap: 6px;
		padding: 3px 0 5px;
		border-bottom: 2px solid #3a3a3a;
	}
	.strip .group.last {
		border: 0;
	}
	.strip .grip {
		margin: 0 0 -2px;
	}
	.strip button {
		display: grid;
		place-items: center;
		width: 28px;
		height: 22px;
	}
	.strip .active {
		background: #363636;
		border-radius: 2px;
	}
	.strip .letter {
		display: flex;
		align-items: center;
		justify-content: center;
		gap: 1px;
		font-size: 17px;
	}
	.letter i {
		width: 1px;
		height: 17px;
		background: #ddd;
	}
	.panels {
		display: flex;
		flex-direction: column;
		flex: 1;
		min-width: 0;
		border-right: 1px solid #3a3a3a;
	}
	.history {
		display: flex;
	}
	.history ul {
		flex: 1;
		padding-top: 9px;
	}
	.history li {
		display: flex;
		align-items: center;
		gap: 11px;
		height: 23px;
		padding-left: 5px;
		border-top: 1px solid #434343;
	}
	.history li.on {
		background: #696969;
		color: #fff;
	}
	.box {
		width: 13px;
		height: 13px;
		border: 1px solid #484848;
		border-right-color: #626262;
		border-bottom-color: #626262;
	}
	.history-scroll {
		display: flex;
		flex-direction: column;
		align-items: center;
		width: 16px;
		padding: 11px 0 6px;
		background: #4b4b4b;
		color: #999;
	}
	.history-scroll .thumb {
		width: 12px;
		height: 22px;
		margin: auto 0 2px;
		background: #696969;
	}
	.history-tools {
		display: flex;
		align-items: center;
		justify-content: flex-end;
		gap: 14px;
		height: 25px;
		padding-right: 27px;
		border-top: 1px solid #434343;
	}
	.layer-tabs {
		height: 30px;
		border-top: 3px solid #3a3a3a;
	}
	.row {
		display: flex;
		align-items: center;
		border-bottom: 1px solid #434343;
		color: #8a8a8a;
	}
	.row .pick {
		border-color: #5e5e5e;
		background: none;
	}
	.row .pick > .chevron {
		color: #6a6a6a;
	}
	.row select {
		opacity: 1;
	}
	.filter {
		height: 32px;
		padding: 5px 10px 0 4px;
		color: #ddd;
	}
	.filter .pick {
		width: 87px;
		padding-left: 6px;
	}
	.filter select {
		padding-left: 4px;
		color: #8a8a8a;
	}
	.filter-icons {
		display: flex;
		align-items: center;
		gap: 10px;
		margin-left: 14px;
	}
	.toggle {
		width: 9px;
		height: 17px;
		margin-left: auto;
		border-radius: 5px;
		background: #3a3a3a;
	}
	.toggle i {
		display: block;
		width: 9px;
		height: 9px;
		margin-bottom: 8px;
		border-radius: 5px;
		background: #ddd;
	}
	.blend {
		height: 27px;
		padding: 1px 10px 0 4px;
	}
	.blend .pick {
		width: 118px;
		margin-right: auto;
	}
	.row .combo {
		width: 54px;
		margin-left: 4px;
		flex: none;
	}
	.locks {
		gap: 8px;
		height: 28px;
		padding: 0 10px 0 64px;
		border: 0;
		color: #ddd;
	}
	.locks label {
		margin-left: auto;
		color: #8a8a8a;
	}
	.row.locks .combo {
		margin-left: -4px;
	}
	.layers {
		flex: 1;
		padding-right: 15px;
		background: #4d4d4d;
	}
	.layer {
		display: flex;
		align-items: center;
		gap: 10px;
		height: 39px;
		padding: 2px 0 0 38px;
		border-bottom: 1px solid #454545;
		background: #535353;
	}
	.group-row {
		height: 26px;
		padding-left: 53px;
		background: #454545;
	}
	.layer.on {
		padding-left: 45px;
		background: #6a6a6a;
	}
	.preview {
		position: relative;
		width: 36px;
		height: 24px;
	}
	.white {
		background: #f2f2f2;
	}
	.black {
		background: #000;
	}
	.badge {
		position: absolute;
		right: -1px;
		bottom: -5px;
		padding: 1px;
		background: #555;
	}
	.framed {
		border: solid #eee;
		border-width: 0 1px 1px 0;
	}
	.layer-tools {
		display: flex;
		align-items: center;
		justify-content: flex-end;
		gap: 12px;
		height: 24px;
		padding-right: 27px;
		border-top: 1px solid #434343;
	}
	.fx {
		font-size: 14px;
		line-height: 16px;
	}

	/* colour picker dialog */
	.picker {
		position: absolute;
		top: 325px;
		right: 188px;
		width: 529px;
		height: 378px;
		background: #535353;
		border: 1px solid #2a7ab8;
		box-shadow: 3px 5px 14px rgba(0, 0, 0, 0.35);
	}
	.title {
		display: flex;
		align-items: center;
		justify-content: space-between;
		height: 30px;
		padding: 0 10px 0 8px;
		background: #fff;
		color: #000;
	}
	.picker-body {
		display: flex;
		padding: 10px 9px 0 10px;
	}
	.spectrum, .slider {
		margin-top: 22px;
	}
	.field {
		width: 256px;
		height: 256px;
		overflow: hidden;
		background: linear-gradient(#fff, #000);
	}
	.field i {
		display: block;
		width: 12px;
		height: 12px;
		margin: -6px 0 0 -6px;
		border: 1px solid #000;
		border-radius: 50%;
	}
	.web {
		gap: 8px;
		margin-top: 13px;
		font-size: 13px;
	}
	.slider {
		position: relative;
		width: 19px;
		height: 256px;
		margin-left: 12px;
		background: linear-gradient(#f00, #fff);
	}
	.handle {
		position: absolute;
		left: -10px;
		bottom: -5px;
	}
	.values {
		flex: 1;
		margin-left: 13px;
	}
	.top {
		display: flex;
		justify-content: space-between;
		padding-right: 2px;
	}
	.compare {
		display: flex;
		flex-direction: column;
		align-items: center;
		padding-top: 19px;
		line-height: 20px;
	}
	.compare i {
		width: 60px;
		height: 68px;
		background: #fff;
	}
	.actions {
		display: flex;
		flex-direction: column;
		gap: 15px;
		width: 101px;
	}
	.actions button {
		height: 27px;
		border: 1px solid #7d7d7d;
		border-radius: 14px;
		font-size: 13px;
		line-height: 16px;
	}
	.actions .ok {
		margin-bottom: -7px;
		border: 1px solid #e0e0e0;
	}
	.numbers {
		display: flex;
		justify-content: space-between;
		padding-top: 14px;
		font-size: 13px;
	}
	.set {
		display: grid;
		gap: 4px;
		margin-bottom: 8px;
	}
	.num {
		display: grid;
		grid-template-columns: 13px 17px 36px 14px;
		column-gap: 6px;
		align-items: center;
		height: 19px;
	}
	.num.wide {
		grid-template-columns: 13px 14px 44px;
	}
	.num.ink {
		grid-template-columns: 33px 36px 13px;
	}
	.num.ink label {
		text-align: right;
	}
	.col.second {
		width: 98px;
	}
	.num input[type='text'] {
		height: 19px;
		padding-left: 2px;
		background: #454545;
		border: 1px solid #666;
		color: #eee;
	}
	input[type='radio'] {
		width: 13px;
		height: 13px;
		border: 1px solid #7d7d7d;
		border-radius: 50%;
	}
	input[type='radio']:checked {
		border: 4px solid #e0e0e0;
		background: #333;
	}
	.hex {
		display: flex;
		align-items: center;
		gap: 6px;
		padding-left: 3px;
	}
	.hex input {
		width: 80px;
		height: 19px;
		padding-left: 2px;
		background: #454545;
		border: 1px solid #2858a8;
		font-size: 12px;
	}
	.hex input::selection {
		background: #1e78d0;
		color: #fff;
	}
	.highlight {
		position: absolute;
		right: 9px;
		top: 184px;
		width: 217px;
		height: 194px;
		border: 3px solid #ee4140;
		pointer-events: none;
	}
	.ball {
		position: absolute;
		right: -29px;
		top: 681px;
		width: 48px;
		height: 48px;
		padding-left: 3px;
		border: 2px solid #e8f4e8;
		border-radius: 50%;
		background: radial-gradient(circle at 60% 20%, #9be59b, #3cc553 55%, #2fae46);
		box-shadow: 0 2px 8px rgba(0, 0, 0, 0.4);
		color: #fff;
		font-weight: 700;
		font-size: 12px;
		line-height: 44px;
	}
</style>
